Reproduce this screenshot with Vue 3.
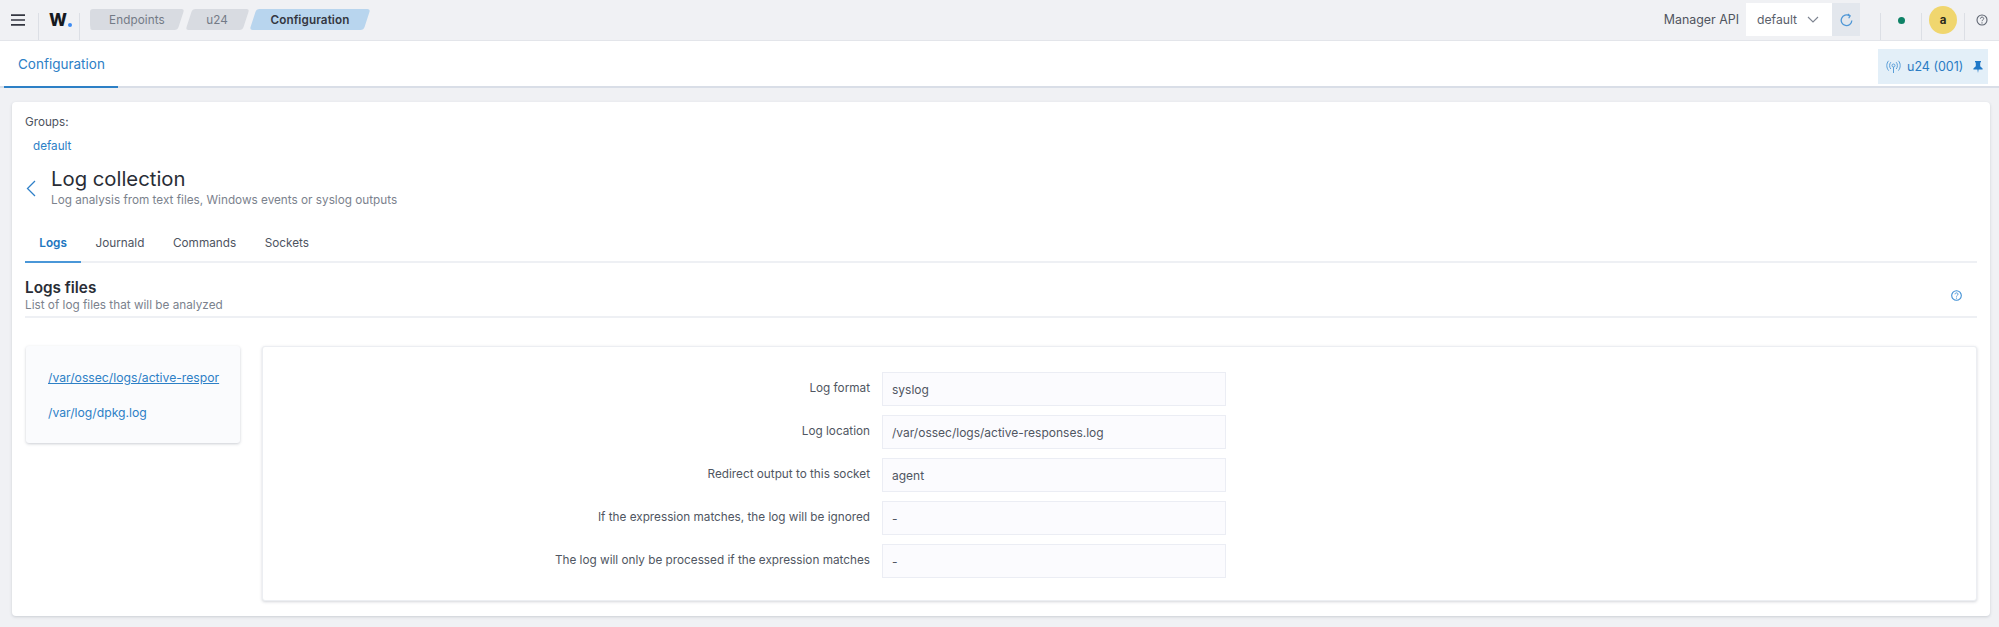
<script setup>
const crumbs = [
  { label: 'Endpoints', cls: 'first', width: 94 },
  { label: 'u24', cls: '', width: 63 },
  { label: 'Configuration', cls: 'active', width: 120 },
]
const subTabs = ['Logs', 'Journald', 'Commands', 'Sockets']
const rows = [
  { label: 'Log format', value: 'syslog' },
  { label: 'Log location', value: '/var/ossec/logs/active-responses.log' },
  { label: 'Redirect output to this socket', value: 'agent' },
  { label: 'If the expression matches, the log will be ignored', value: '-' },
  { label: 'The log will only be processed if the expression matches', value: '-' },
]
</script>

<template>
  <div class="page">
    <header class="topbar">
      <button class="menu" aria-label="Menu">
        <svg width="14" height="12" viewBox="0 0 14 12"><path d="M0 1.2h14M0 6h14M0 10.8h14" stroke="#343741" stroke-width="1.7" fill="none" /></svg>
      </button>
      <div class="logo"><span class="logo-w">W</span><span class="logo-dot"></span></div>
      <nav class="crumbs">
        <span v-for="c in crumbs" :key="c.label" class="crumb" :class="c.cls" :style="{ width: c.width + 'px' }">{{ c.label }}</span>
      </nav>
      <div class="spacer"></div>
      <span class="api-label">Manager API</span>
      <div class="api-select">
        <span>default</span>
        <svg width="12" height="7" viewBox="0 0 12 7"><path d="M1 1l5 5 5-5" stroke="#7d8490" stroke-width="1.1" fill="none" /></svg>
      </div>
      <div class="api-refresh">
        <svg width="13" height="14" viewBox="0 0 13 14"><path d="M9.5 2.9A5.3 5.3 0 1 0 11.8 7.4" stroke="#4f97d6" stroke-width="1.3" fill="none" /><path d="M7.8 1l2.4 1.8-1.5 2.4" stroke="#4f97d6" stroke-width="1.2" fill="none" /></svg>
      </div>
      <div class="cell status"><span class="dot"></span></div>
      <div class="cell avatar-cell"><span class="avatar">a</span></div>
      <div class="cell help">
        <svg width="12" height="12" viewBox="0 0 12 12"><circle cx="6" cy="6" r="5" stroke="#5f6672" stroke-width="1.1" fill="none" /><path d="M4.4 4.7c0-2.1 3.3-2.1 3.3-.1 0 1.2-1.7 1.3-1.7 2.6" stroke="#5f6672" stroke-width="1" fill="none" /><circle cx="6" cy="8.9" r=".65" fill="#5f6672" /></svg>
      </div>
    </header>

    <div class="tabbar">
      <a class="main-tab">Configuration</a>
      <div class="agent-pill">
        <svg width="15" height="14" viewBox="0 0 15 14" fill="none" stroke="#5b9fd8" stroke-width="1"><circle cx="7.5" cy="5.5" r="1.5" /><path d="M7.5 7v6M4.8 9c-1.6-1.9-1.6-5 0-6.8M10.2 9c1.6-1.9 1.6-5 0-6.8M2.6 10.6C.2 7.6.2 3.4 2.6.8M12.4 10.6c2.4-3 2.4-7.2 0-9.8" /></svg>
        <span class="agent-name">u24 (001)</span>
        <svg width="10" height="12" viewBox="0 0 10 12"><path d="M2 0h6v1.1l-.8.6v3.6L9.6 7.6v.9H5.6L5 12l-.6-3.5H.4v-.9l2.4-2.3V1.7L2 1.1z" fill="#1f78c8" /></svg>
      </div>
    </div>

    <main class="content">
      <section class="card">
        <div class="groups">
          <div class="groups-label">Groups:</div>
          <a class="group-link">default</a>
        </div>

        <div class="title-row">
          <svg class="back" width="10" height="17" viewBox="0 0 10 17"><path d="M9 1L1.5 8.5 9 16" stroke="#2f80c8" stroke-width="1.3" fill="none" /></svg>
          <div>
            <h1>Log collection</h1>
            <p class="muted">Log analysis from text files, Windows events or syslog outputs</p>
          </div>
        </div>

        <div class="subtabs">
          <a v-for="(t, i) in subTabs" :key="t" class="subtab" :class="{ on: i === 0 }">{{ t }}</a>
        </div>

        <div class="section-head">
          <div>
            <h2>Logs files</h2>
            <p class="muted">List of log files that will be analyzed</p>
          </div>
          <svg width="11" height="11" viewBox="0 0 11 11"><circle cx="5.5" cy="5.5" r="4.8" stroke="#3f8fd4" stroke-width="1.1" fill="none" /><path d="M4 4.3c0-1.9 3-1.9 3-.1 0 1.1-1.5 1.2-1.5 2.4" stroke="#3f8fd4" stroke-width=".9" fill="none" /><circle cx="5.5" cy="8.1" r=".6" fill="#3f8fd4" /></svg>
        </div>

        <div class="detail">
          <aside class="file-list">
            <a class="file selected">/var/ossec/logs/active-respor</a>
            <a class="file">/var/log/dpkg.log</a>
          </aside>
          <div class="settings">
            <div v-for="r in rows" :key="r.label" class="row">
              <label>{{ r.label }}</label>
              <div class="value">{{ r.value }}</div>
            </div>
          </div>
        </div>
      </section>
    </main>
  </div>
</template>

<style scoped>
.page {
  width: 1999px;
  height: 627px;
  display: flex;
  flex-direction: column;
  overflow: hidden;
  background: #f0f1f4;
  font-family: Inter, "Noto Sans", sans-serif;
  font-size: 12px;
  color: #343741;
}
.topbar {
  height: 41px;
  flex: none;
  box-sizing: border-box;
  display: flex;
  align-items: stretch;
  border-bottom: 1px solid #e3e5ea;
}
.menu {
  width: 38px;
  padding: 0 0 0 11px;
  margin: 0;
  border: 0;
  background: none;
  display: flex;
  align-items: center;
  justify-content: flex-start;
}
.logo {
  width: 42px;
  box-sizing: border-box;
  border-left: 1px solid #dcdfe5;
  border-right: 1px solid #dcdfe5;
  margin-top: 13px;
  display: flex;
  align-items: flex-start;
  padding-left: 10px;
  gap: 1px;
}
.logo-w {
  font-weight: 800;
  font-size: 17px;
  line-height: 14px;
  color: #16191f;
}
.logo-dot {
  width: 4px;
  height: 4px;
  border-radius: 50%;
  background: #3d8bf2;
  margin-top: 10px;
}
.crumbs {
  display: flex;
  margin-left: 10px;
  margin-top: 9px;
  gap: 1.5px;
  height: 21px;
}
.crumb {
  position: relative;
  z-index: 0;
  display: flex;
  align-items: center;
  justify-content: center;
  font-size: 11.7px;
  color: #737a86;
  letter-spacing: .1px;
}
.crumb::before {
  content: '';
  position: absolute;
  inset: 0 3px;
  z-index: -1;
  background: #d8dbe1;
  border-radius: 3px;
  transform: skewX(-18deg);
}
.crumb.first::after {
  content: '';
  position: absolute;
  left: 0;
  top: 0;
  bottom: 0;
  width: 12px;
  z-index: -1;
  background: #d8dbe1;
  border-radius: 3px 0 0 5px;
}
.crumb.active {
  color: #343741;
  font-weight: 600;
}
.crumb.active::before {
  background: #b8d5ee;
}
.spacer {
  flex: 1;
}
.api-label {
  align-self: center;
  margin-top: -2px;
  margin-right: 7px;
  font-size: 12.4px;
  color: #50555f;
}
.api-select {
  width: 86px;
  height: 33px;
  margin-top: 3px;
  box-sizing: border-box;
  background: #fff;
  padding: 0 13px 0 11px;
  display: flex;
  align-items: center;
  justify-content: space-between;
  font-size: 12.2px;
  color: #5a606b;
}
.api-refresh {
  width: 28px;
  height: 33px;
  margin-top: 3px;
  background: #e3e7ed;
  display: flex;
  align-items: center;
  justify-content: center;
}
.cell {
  flex: none;
  margin-top: 13px;
  border-left: 1px solid #dcdfe5;
  box-sizing: border-box;
  display: flex;
  justify-content: center;
  align-items: center;
  height: 27px;
}
.status {
  width: 41px;
  margin-left: 20px;
}
.dot {
  width: 7px;
  height: 7px;
  margin-top: -13px;
  border-radius: 50%;
  background: #0e8266;
}
.avatar-cell {
  width: 43px;
}
.avatar {
  width: 28px;
  height: 28px;
  flex: none;
  margin-top: -13px;
  border-radius: 50%;
  background: #f0d66e;
  display: flex;
  align-items: center;
  justify-content: center;
  font-size: 11.5px;
  font-weight: 700;
  color: #2b2a1c;
}
.help {
  width: 35px;
}
.help svg {
  margin-top: -13px;
}
.tabbar {
  height: 47px;
  flex: none;
  box-sizing: border-box;
  background: #fff;
  border-bottom: 2px solid #d9dee7;
  display: flex;
  justify-content: space-between;
  padding: 0 11px 0 4px;
}
.main-tab {
  width: 114px;
  height: 47px;
  box-sizing: border-box;
  padding-left: 14px;
  display: flex;
  align-items: center;
  font-size: 13.5px;
  color: #2d80c6;
  border-bottom: 2px solid #2d80c6;
}
.agent-pill {
  width: 110px;
  height: 35px;
  margin-top: 8px;
  box-sizing: border-box;
  padding: 0 5px 0 8px;
  background: #e3eff8;
  display: flex;
  align-items: center;
  font-size: 12.5px;
  color: #2a7cc4;
}
.agent-name {
  margin: 0 auto 0 6px;
}
.content {
  flex: 1;
  min-height: 0;
  padding: 14px 9px 11px 12px;
}
.card {
  height: 100%;
  box-sizing: border-box;
  background: #fff;
  border-radius: 4px;
  box-shadow: 0 1px 3px rgba(70, 80, 100, .22);
  padding: 12px 13px 15px 13px;
  display: flex;
  flex-direction: column;
}
.groups-label {
  font-size: 11.7px;
  line-height: 15px;
  margin-top: 1px;
  color: #4c525d;
}
.group-link {
  display: block;
  margin: 9px 0 0 8px;
  font-size: 11.7px;
  line-height: 15px;
  color: #2d80c6;
}
.title-row {
  display: flex;
  align-items: flex-start;
  margin-top: 12px;
}
.back {
  margin: 14px 15px 0 1px;
  flex: none;
}
h1 {
  margin: 0;
  font-size: 20.3px;
  line-height: 26px;
  font-weight: 400;
  color: #292d36;
}
.muted {
  margin: 0;
  font-size: 11.75px;
  line-height: 16px;
  color: #7b828d;
}
.subtabs {
  display: flex;
  margin-top: 20px;
  height: 35px;
  box-sizing: border-box;
  border-bottom: 2px solid #eef0f4;
}
.subtab {
  height: 35px;
  box-sizing: border-box;
  padding: 8px 14.3px 0;
  font-size: 11.75px;
  line-height: 15px;
  color: #4e545f;
}
.subtab.on {
  color: #2176bf;
  font-weight: 600;
  border-bottom: 2px solid #4a97d8;
}
.section-head {
  display: flex;
  align-items: center;
  justify-content: space-between;
  border-bottom: 2px solid #eef0f4;
  height: 55px;
  box-sizing: border-box;
  padding: 12px 15px 0 0;
}
h2 {
  margin: 0;
  font-size: 15.3px;
  line-height: 19px;
  font-weight: 600;
  color: #292d36;
}
.detail {
  display: flex;
  align-items: flex-start;
  gap: 22px;
  margin: 28px 0 0 1px;
}
.file-list {
  width: 214px;
  height: 97px;
  box-sizing: border-box;
  flex: none;
  background: #fafbfd;
  border-radius: 3px;
  box-shadow: 0 1px 3px rgba(70, 80, 100, .28);
  padding: 24px 10px 0 22px;
  display: flex;
  flex-direction: column;
  gap: 19px;
  overflow: hidden;
}
.file {
  font-size: 12.2px;
  line-height: 16px;
  white-space: nowrap;
  overflow: hidden;
  color: #2d80c6;
}
.file.selected {
  text-decoration: underline;
}
.settings {
  flex: 1;
  height: 255px;
  box-sizing: border-box;
  background: #fff;
  border-radius: 3px;
  border: 1px solid #eceef2;
  box-shadow: 0 1px 3px rgba(70, 80, 100, .24);
  padding: 25px 0 0;
  display: flex;
  flex-direction: column;
  gap: 9px;
}
.row {
  display: grid;
  grid-template-columns: 607px 344px;
  column-gap: 12px;
  align-items: center;
  height: 34px;
}
.row label {
  text-align: right;
  font-size: 11.75px;
  color: #505662;
  margin-top: -2px;
}
.value {
  height: 34px;
  box-sizing: border-box;
  border: 1px solid #ebedf4;
  background: #fbfbfe;
  padding: 0 9px;
  display: flex;
  align-items: center;
  font-size: 12px;
  color: #505662;
}
</style>

<style>
html, body {
  margin: 0;
  background: #f0f1f4;
}
</style>
